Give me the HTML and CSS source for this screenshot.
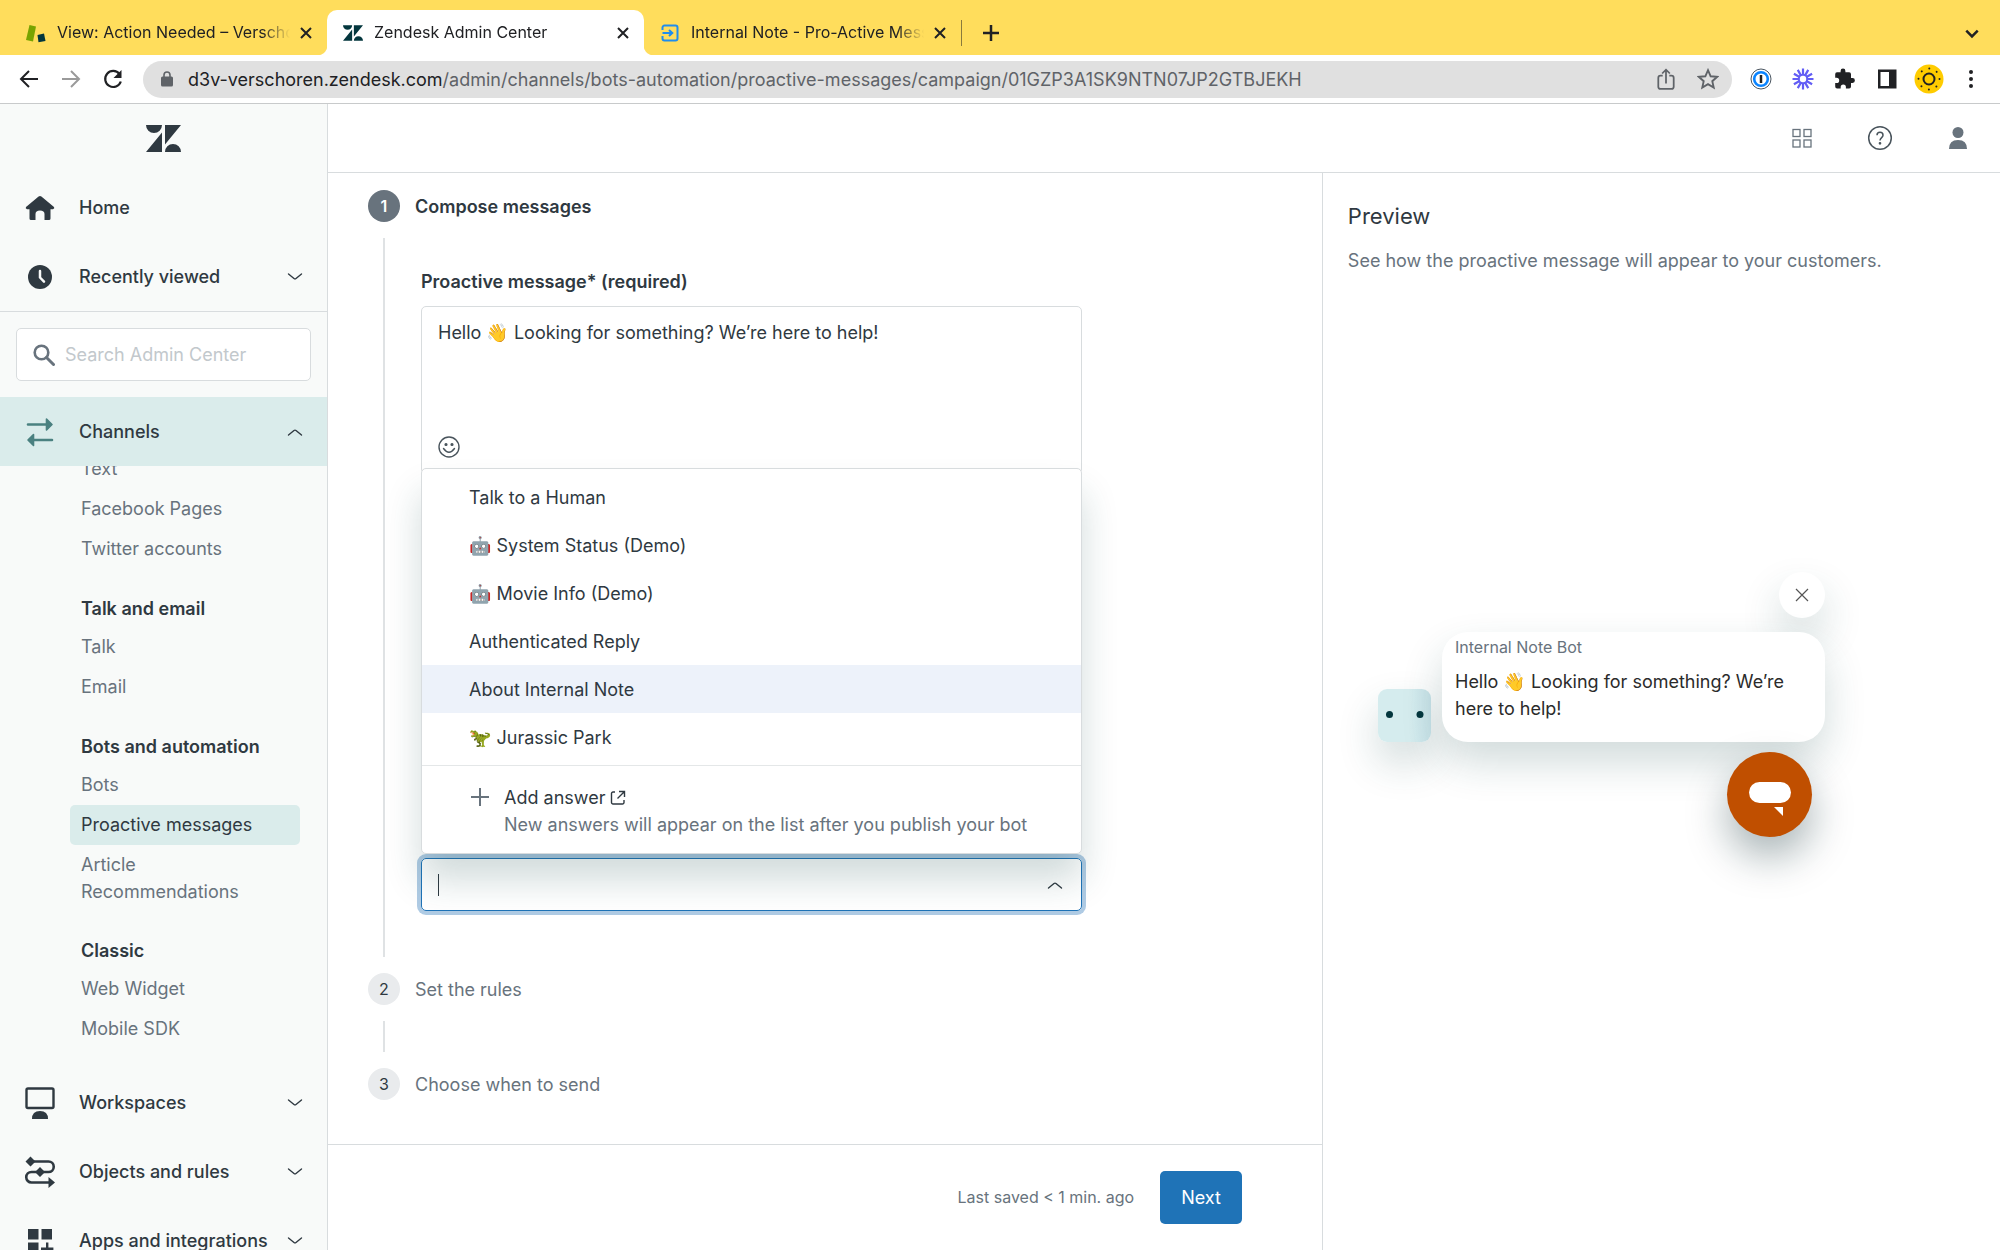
FILE: index.html
```html
<!DOCTYPE html>
<html lang="en">
<head>
    <meta charset="UTF-8">
    <meta name="viewport" content="width=device-width, initial-scale=1">
    <title>Zendesk Admin Center</title>
    <link rel="stylesheet" href="styles.css">
</head>
<body>
<!-- shared icons -->
<svg class="defs" aria-hidden="true">
    <symbol id="i-zendesk" viewBox="0 0 35 27"><path d="M0 0h16a8 8 0 0 1-16 0zM16 7.500V27H0zM19 0h16L19 19.500zM19 27a8 8 0 0 1 16 0z" fill="currentColor"/></symbol>
    <symbol id="i-close" viewBox="0 0 14 14"><path d="M2 2l10 10M12 2L2 12" fill="none" stroke="currentColor" stroke-width="2"/></symbol>
    <symbol id="i-down" viewBox="0 0 16 16"><path d="M1.500 5L7 9.500q1 .8 2 0L14.500 5" fill="none" stroke="currentColor" stroke-width="1.400" stroke-linecap="round"/></symbol>
    <symbol id="i-up" viewBox="0 0 16 16"><path d="M1.500 11L7 6.500q1-.8 2 0l5.500 4.500" fill="none" stroke="currentColor" stroke-width="1.400" stroke-linecap="round"/></symbol>
</svg>

<div class="browser">
    <div class="tabs">
        <div class="tab">
            <svg class="fav" viewBox="0 0 20 20"><path d="M3.500 2l6.500 1.500L7 18.500 0 17z" fill="#78a300"/><path d="M11.500 12l6.500-1.500 1.500 7.500-7 1.200z" fill="#03363d"/></svg>
            <span class="tab-title">View: Action Needed – Verschoren</span>
            <button class="tab-close" aria-label="Close tab"><svg><use href="#i-close"/></svg></button>
        </div>
        <div class="tab active">
            <svg class="fav logo"><use href="#i-zendesk"/></svg>
            <span class="tab-title">Zendesk Admin Center</span>
            <button class="tab-close" aria-label="Close tab"><svg><use href="#i-close"/></svg></button>
        </div>
        <div class="tab">
            <svg class="fav" viewBox="0 0 20 20" fill="none" stroke="#1f8ded" stroke-width="2"><path d="M2.500 7V4.500a2 2 0 0 1 2-2h11a2 2 0 0 1 2 2v11a2 2 0 0 1-2 2h-11a2 2 0 0 1-2-2V13M2.500 10H12M9 7l3.300 3L9 13"/></svg>
            <span class="tab-title">Internal Note - Pro-Active Messages</span>
            <button class="tab-close" aria-label="Close tab"><svg><use href="#i-close"/></svg></button>
        </div>
        <button class="new-tab" aria-label="New tab"><svg viewBox="0 0 18 18"><path d="M9 1v16M1 9h16" stroke="#202124" stroke-width="2.500"/></svg></button>
        <button class="tab-search" aria-label="Search tabs"><svg viewBox="0 0 14 14"><path d="M2 5l5 5 5-5" fill="none" stroke="#202124" stroke-width="2.200"/></svg></button>
    </div>

    <div class="toolbar">
        <button class="nav-btn" aria-label="Back"><svg viewBox="0 0 20 20"><path d="M19 10H2M10 2l-8 8 8 8" fill="none" stroke="#202124" stroke-width="2"/></svg></button>
        <button class="nav-btn" aria-label="Forward"><svg viewBox="0 0 20 20"><path d="M1 10h17M10 2l8 8-8 8" fill="none" stroke="#9a9a9a" stroke-width="2"/></svg></button>
        <button class="nav-btn" aria-label="Reload"><svg viewBox="0 0 20 20"><path d="M16.500 5A8 8 0 1 0 17.800 12.500" fill="none" stroke="#202124" stroke-width="2.200"/><path d="M18.500 1v8h-8z" fill="#202124"/></svg></button>
        <div class="omnibox">
            <svg class="lock" viewBox="0 0 12 16"><rect x="0" y="5.500" width="12" height="10" rx="1.500" fill="#5f6368"/><path d="M3 6V4a3 3 0 0 1 6 0v2" fill="none" stroke="#5f6368" stroke-width="1.600"/></svg>
            <span class="url"><b>d3v-verschoren.zendesk.com</b>/admin/channels/bots-automation/proactive-messages/campaign/01GZP3A1SK9NTN07JP2GTBJEKH</span>
            <button class="bar-btn" aria-label="Share"><svg viewBox="0 0 20 20" fill="none" stroke="#5f6368" stroke-width="1.600"><path d="M7 7H5a2 2 0 0 0-2 2v8a2 2 0 0 0 2 2h10a2 2 0 0 0 2-2V9a2 2 0 0 0-2-2h-2M10 14V2M6.500 5L10 1.500 13.500 5"/></svg></button>
            <button class="bar-btn" aria-label="Bookmark"><svg viewBox="0 0 20 20"><path d="M10 2l2.400 5.500 6 .5-4.500 4 1.300 5.800L10 14.700l-5.200 3.100L6.100 12 1.600 8l6-.5z" fill="none" stroke="#5f6368" stroke-width="1.700"/></svg></button>
        </div>
        <div class="extensions">
            <button class="bar-btn" aria-label="Passwords"><svg viewBox="0 0 22 22"><circle cx="11" cy="11" r="10" fill="#fff" stroke="#4a5560" stroke-width="1"/><circle cx="11" cy="11" r="6.800" fill="#fff" stroke="#0a84ff" stroke-width="2.600"/><path d="M11 7v8" stroke="#222" stroke-width="2.500"/></svg></button>
            <button class="bar-btn" aria-label="Loom"><svg viewBox="0 0 22 22"><g stroke="#625df5" stroke-width="2.200"><path d="M11 .5v21M.5 11h21M5.750 1.900l10.500 18.200M16.250 1.900L5.750 20.100M1.900 5.750l18.200 10.500M20.100 5.750L1.900 16.250"/></g><circle cx="11" cy="11" r="5.200" fill="#625df5"/><circle cx="11" cy="11" r="3.200" fill="#fff"/></svg></button>
            <button class="bar-btn" aria-label="Extensions"><svg viewBox="0 0 22 22"><path d="M18.500 10.100H17V6.200a1.900 1.900 0 0 0-1.900-1.900h-3.700V2.900a2.400 2.400 0 0 0-4.800 0v1.400H3A1.900 1.900 0 0 0 1.200 6.200v3.600h1.400a2.600 2.600 0 0 1 0 5.200H1.200v3.600a1.900 1.900 0 0 0 1.900 1.900h3.600v-1.400a2.600 2.600 0 0 1 5.200 0v1.400h3.200a1.900 1.900 0 0 0 1.900-1.900v-3.700h1.500a2.400 2.400 0 0 0 0-4.800z" fill="#202124"/></svg></button>
            <button class="bar-btn" aria-label="Side panel"><svg viewBox="0 0 22 22"><path d="M2 1.500h18.500v19H2z" fill="#202124"/><path d="M4.500 4H13v14H4.500z" fill="#fff"/></svg></button>
            <button class="profile" aria-label="Profile"><svg viewBox="0 0 30 30"><circle cx="15" cy="15" r="14.500" fill="#ffcc00"/><circle cx="15" cy="15" r="5.500" fill="none" stroke="#222" stroke-width="2"/><circle cx="15" cy="15" r="10.500" fill="none" stroke="#222" stroke-width="2" stroke-linecap="round" stroke-dasharray="0.010 8.236"/></svg></button>
            <button class="bar-btn" aria-label="Menu"><svg viewBox="0 0 22 22" fill="#202124"><circle cx="11" cy="4" r="2"/><circle cx="11" cy="11" r="2"/><circle cx="11" cy="18" r="2"/></svg></button>
        </div>
    </div>
</div>

<div class="app">
    <nav class="sidebar">
        <div class="brand"><svg class="brand-logo"><use href="#i-zendesk"/></svg></div>
        <a class="nav-row" href="#">
            <svg class="nav-icon" viewBox="0 0 32 32"><path d="M14.600 4.600q1.400-1.100 2.800 0L30 15q1 1.500-1 2.200h-2.500v9.300q0 1.500-1.500 1.500h-4.500v-6q0-3.500-4.500-3.500T11.500 22v6H7q-1.500 0-1.500-1.500v-9.300H3q-2-.7-1-2.200z" fill="#2f3941"/></svg>
            <span>Home</span>
        </a>
        <button class="nav-row">
            <svg class="nav-icon" viewBox="0 0 32 32"><circle cx="16" cy="16" r="12" fill="#2f3941"/><path d="M16 10v6.500l4 4.200" fill="none" stroke="#f8f9f9" stroke-width="2.500" stroke-linecap="round" stroke-linejoin="round"/></svg>
            <span>Recently viewed</span>
            <svg class="chev"><use href="#i-down"/></svg>
        </button>
        <div class="search-wrap">
            <label class="search">
                <svg viewBox="0 0 22 22"><circle cx="8.500" cy="8.500" r="6.800" fill="none" stroke="#68737d" stroke-width="2.600"/><path d="M13.500 13.500l7 7" stroke="#68737d" stroke-width="3" stroke-linecap="round"/></svg>
                <input type="search" placeholder="Search Admin Center" aria-label="Search Admin Center">
            </label>
        </div>
        <button class="nav-row open">
            <svg class="nav-icon" viewBox="0 0 32 32" stroke="#4a8180" fill="#4a8180" stroke-linecap="round" stroke-linejoin="round"><path d="M4 8.500h20M28 24H8" stroke-width="2.600" fill="none"/><path d="M22.500 3L28 8.500 22.500 14zM9.500 18.500L4 24l5.500 5.500z" stroke-width="1.600"/></svg>
            <span>Channels</span>
            <svg class="chev"><use href="#i-up"/></svg>
        </button>
        <div class="submenu">
            <div class="submenu-list">
                <a href="#">Text</a>
                <a href="#">Facebook Pages</a>
                <a href="#">Twitter accounts</a>
                <h3>Talk and email</h3>
                <a href="#">Talk</a>
                <a href="#">Email</a>
                <h3>Bots and automation</h3>
                <a href="#">Bots</a>
                <a href="#" class="current">Proactive messages</a>
                <a href="#">Article Recommendations</a>
                <h3>Classic</h3>
                <a href="#">Web Widget</a>
                <a href="#">Mobile SDK</a>
            </div>
        </div>
        <button class="nav-row">
            <svg class="nav-icon" viewBox="0 0 32 32"><rect x="2.500" y="1.500" width="27" height="19.500" rx="1.500" fill="none" stroke="#2f3941" stroke-width="2.400"/><path d="M8 32q0-8 8-8t8 8z" fill="#2f3941"/></svg>
            <span>Workspaces</span>
            <svg class="chev"><use href="#i-down"/></svg>
        </button>
        <button class="nav-row">
            <svg class="nav-icon" viewBox="0 0 32 32"><path d="M7 5.500h17.500a5 5 0 0 1 0 10.500h-17a5 5 0 0 0 0 10.500H26" fill="none" stroke="#2f3941" stroke-width="2.600"/><path d="M6.500.5l5 5-5 5-5-5zM16 11l5 5-5 5-5-5zM24.500 21l6.500 5.500-6.500 5.500z" fill="#2f3941"/></svg>
            <span>Objects and rules</span>
            <svg class="chev"><use href="#i-down"/></svg>
        </button>
        <button class="nav-row">
            <svg class="nav-icon" viewBox="0 0 32 32"><path d="M4 4h10.500v10.500H4zM17.500 4H28v10.500H17.500zM4 17.500h10.500V28H4zM22 17.500h2.400v5h5v2.400h-5v5H22v-5h-5v-2.400h5z" fill="#2f3941"/></svg>
            <span>Apps and integrations</span>
            <svg class="chev"><use href="#i-down"/></svg>
        </button>
    </nav>

    <div class="page">
        <header class="topbar">
            <button aria-label="Products"><svg viewBox="0 0 26 26" fill="none" stroke="#68737d" stroke-width="1.300"><rect x="4" y="4.500" width="7" height="7"/><rect x="15" y="4.500" width="7" height="7"/><rect x="4" y="15" width="7" height="7"/><rect x="15" y="15" width="7" height="7"/></svg></button>
            <button aria-label="Help"><svg viewBox="0 0 26 26" fill="none" stroke="#49545c" stroke-width="1.500"><circle cx="13" cy="13" r="11.300"/><path d="M10 10.300c0-4 6-4 6 0 0 2.400-3 2.200-3 5.200"/><circle cx="13" cy="18.300" r=".6" fill="#49545c"/></svg></button>
            <button aria-label="Account"><svg viewBox="0 0 26 26" fill="#68737d"><circle cx="13" cy="7.500" r="5.500"/><path d="M4 24q0-9 9-9t9 9z"/></svg></button>
        </header>

        <div class="content">
            <main class="editor">
                <div class="steps">
                    <section class="step current">
                        <h2><span class="num">1</span>Compose messages</h2>
                        <div class="step-body form">
                            <label class="field-label" for="message">Proactive message* (required)</label>
                            <div class="composer">
                                <textarea id="message">Hello 👋 Looking for something? We’re here to help!</textarea>
                                <button class="emoji-btn" aria-label="Insert emoji"><svg viewBox="0 0 22 22" fill="none" stroke="#49545c" stroke-width="1.400"><circle cx="11" cy="11" r="10"/><path d="M5.500 12.500q5.500 7.500 11 0" stroke-linecap="round"/><circle cx="8" cy="8.500" r=".9" fill="#49545c"/><circle cx="14" cy="8.500" r=".9" fill="#49545c"/></svg></button>
                            </div>
                            <div class="combo">
                                <span class="caret"></span>
                                <input type="text" role="combobox" aria-label="Answer" aria-expanded="true">
                                <svg class="chev"><use href="#i-up"/></svg>
                                <div class="menu">
                                    <ul role="listbox">
                                        <li role="option">Talk to a Human</li>
                                        <li role="option">🤖 System Status (Demo)</li>
                                        <li role="option">🤖 Movie Info (Demo)</li>
                                        <li role="option">Authenticated Reply</li>
                                        <li role="option" class="hover">About Internal Note</li>
                                        <li role="option">🦖 Jurassic Park</li>
                                    </ul>
                                    <a class="add" href="#">
                                        <svg class="plus" viewBox="0 0 18 18"><path d="M9 0v18M0 9h18" stroke="#68737d" stroke-width="2"/></svg>
                                        <span>
                                            <span class="add-title">Add answer <svg viewBox="0 0 16 16" fill="none" stroke="#2f3941" stroke-width="1.400"><path d="M5 2H3a1.500 1.500 0 0 0-1.500 1.500v9A1.500 1.500 0 0 0 3 14h9.500a1.500 1.500 0 0 0 1.500-1.500V10M9 1.500h5.500V7M14 2L7.500 8.500"/></svg></span>
                                            <span class="add-note">New answers will appear on the list after you publish your bot</span>
                                        </span>
                                    </a>
                                </div>
                            </div>
                        </div>
                    </section>
                    <section class="step">
                        <h2><span class="num">2</span>Set the rules</h2>
                        <div class="step-body"></div>
                    </section>
                    <section class="step">
                        <h2><span class="num">3</span>Choose when to send</h2>
                    </section>
                </div>
                <footer class="actions">
                    <span>Last saved &lt; 1 min. ago</span>
                    <button class="primary">Next</button>
                </footer>
            </main>

            <aside class="preview">
                <h1>Preview</h1>
                <p>See how the proactive message will appear to your customers.</p>
                <div class="widget">
                    <button class="dismiss" aria-label="Dismiss"><svg viewBox="0 0 14 14"><path d="M1 1l12 12M13 1L1 13" stroke="#555" stroke-width="1.200"/></svg></button>
                    <div class="message">
                        <svg class="bot" viewBox="0 0 53 53"><circle cx="11.500" cy="25.500" r="3.500" fill="#03363d"/><circle cx="42" cy="25.500" r="3.500" fill="#03363d"/></svg>
                        <div class="bubble">
                            <div class="from">Internal Note Bot</div>
                            <div class="text">Hello 👋 Looking for something? We’re here to help!</div>
                        </div>
                    </div>
                    <button class="launcher" aria-label="Open messaging"><svg viewBox="0 0 42 34"><rect width="42" height="21" rx="10.500" fill="#fff"/><path d="M25 25h9v9z" fill="#fff"/></svg></button>
                </div>
            </aside>
        </div>
    </div>
</div>
</body>
</html>
```
FILE: styles.css
```css
* {
    box-sizing: border-box;
    margin: 0;
    padding: 0;
}

body {
    display: flex;
    flex-direction: column;
    height: 100vh;
    overflow: hidden;
    background: #fff;
    color: #2f3941;
    font: 18px/27px Inter, "Noto Color Emoji", sans-serif;
}

button {
    border: 0;
    background: none;
    color: inherit;
    font: inherit;
    cursor: pointer;
}

input,
textarea {
    border: 0;
    outline: 0;
    background: none;
    color: inherit;
    font: inherit;
}

a {
    color: inherit;
    text-decoration: none;
}

svg {
    display: block;
    flex: none;
}

.defs {
    position: absolute;
    width: 0;
    height: 0;
}

/* browser chrome */
.browser {
    flex: none;
    border-bottom: 1px solid #c8cacb;
}

.tabs {
    display: flex;
    align-items: stretch;
    height: 55px;
    padding: 10px 20px 0 10px;
    background: #ffdd5c;
    color: #202124;
    font-size: 16px;
}

.tab {
    display: flex;
    align-items: center;
    width: 317px;
    padding: 0 14px 0 16px;
}

.tab.active {
    position: relative;
    background: #fff;
    border-radius: 10px 10px 0 0;
}

.tab.active::before,
.tab.active::after {
    content: "";
    position: absolute;
    bottom: 0;
    left: -10px;
    width: 10px;
    height: 10px;
    background: radial-gradient(circle at 0 0, #ffdd5c 10px, #fff 11px);
}

.tab.active::after {
    left: 100%;
    background: radial-gradient(circle at 100% 0, #ffdd5c 10px, #fff 11px);
}

.fav {
    width: 20px;
    height: 20px;
    margin-right: 11px;
}

.fav.logo {
    color: #03363d;
}

.tab-title {
    flex: 1;
    overflow: hidden;
    white-space: nowrap;
    -webkit-mask-image: linear-gradient(to right, #000 88%, transparent);
    mask-image: linear-gradient(to right, #000 88%, transparent);
}

.tab-close svg {
    width: 14px;
    height: 14px;
    margin-left: 9px;
}

.new-tab {
    display: flex;
    align-items: center;
    height: 26px;
    margin-top: 10px;
    padding: 0 20px;
    border-left: 1px solid #8a7a3c;
}

.new-tab svg {
    width: 18px;
    height: 18px;
}

.tab-search {
    margin-left: auto;
}

.tab-search svg {
    width: 16px;
    height: 16px;
}

.toolbar {
    display: flex;
    align-items: center;
    height: 48px;
    padding: 0 18px 0 19px;
}

.nav-btn {
    padding-right: 22px;
}

.nav-btn svg {
    width: 20px;
    height: 20px;
}

.omnibox {
    display: flex;
    flex: 1;
    align-items: center;
    gap: 20px;
    height: 37px;
    margin-left: -2px;
    padding: 0 13px 0 18px;
    border-radius: 19px;
    background: #e0e0e0;
}

.lock {
    width: 12px;
    height: 16px;
}

.url {
    flex: 1;
    margin-left: -5px;
    overflow: hidden;
    color: #5f6368;
    white-space: nowrap;
}

.url b {
    color: #202124;
    font-weight: 400;
}

.bar-btn svg {
    width: 22px;
    height: 22px;
}

.profile svg {
    width: 30px;
    height: 30px;
}

.extensions {
    display: flex;
    align-items: center;
    gap: 20px;
    padding-left: 18px;
}

.extensions .profile {
    margin: 0 -4px;
}

/* sidebar */
.app {
    display: flex;
    flex: 1;
    min-height: 0;
}

.sidebar {
    display: flex;
    flex: none;
    flex-direction: column;
    width: 328px;
    overflow: hidden;
    border-right: 1px solid #d8dcde;
    background: #f8faf9;
}

.brand {
    display: flex;
    flex: none;
    align-items: center;
    justify-content: center;
    height: 69px;
}

.brand-logo {
    width: 35px;
    height: 27px;
}

.nav-row {
    display: flex;
    flex: none;
    align-items: center;
    width: 100%;
    height: 69px;
    padding: 0 24px;
    font-weight: 500;
    text-align: left;
    white-space: nowrap;
}

.nav-row.open {
    background: #daeceb;
}

.nav-icon {
    width: 32px;
    height: 32px;
    margin-right: 23px;
}

.chev {
    width: 16px;
    height: 16px;
    margin-left: auto;
}

.search-wrap {
    flex: none;
    padding: 16px;
    border-top: 1px solid #d8dcde;
}

.search {
    display: flex;
    align-items: center;
    gap: 10px;
    height: 53px;
    padding: 0 16px;
    border: 1px solid #d8dcde;
    border-radius: 5px;
    background: #fff;
}

.search svg {
    width: 22px;
    height: 22px;
}

.search input {
    flex: 1;
    min-width: 0;
}

.search input::placeholder {
    color: #c2c8cc;
}

.submenu {
    flex: none;
    overflow: hidden;
    padding: 0 27px 19px 70px;
}

/* the list is scrolled a little under the Channels row */
.submenu-list {
    margin-top: -17px;
}

.submenu a {
    display: block;
    min-height: 40px;
    padding: 6px 11px;
    border-radius: 5px;
    color: #68737d;
}

.submenu a.current {
    background: #daeceb;
    color: #2f3941;
}

.submenu h3 {
    padding: 26px 11px 5px;
    font-size: 18px;
    font-weight: 600;
}

/* page */
.page {
    display: flex;
    flex: 1;
    flex-direction: column;
    min-width: 0;
}

.topbar {
    display: flex;
    flex: none;
    align-items: center;
    justify-content: flex-end;
    gap: 52px;
    height: 69px;
    padding: 0 29px;
    border-bottom: 1px solid #d8dcde;
}

.topbar svg {
    width: 26px;
    height: 26px;
}

.content {
    display: flex;
    flex: 1;
    min-height: 0;
}

.editor {
    display: flex;
    flex: 1;
    flex-direction: column;
    min-width: 0;
    border-right: 1px solid #d8dcde;
}

.steps {
    flex: 1;
    padding: 17px 40px;
}

.step h2 {
    display: flex;
    align-items: center;
    gap: 15px;
    height: 32px;
    color: #68737d;
    font-size: 18px;
    font-weight: 400;
}

.step.current h2 {
    color: #2f3941;
    font-weight: 600;
}

.num {
    width: 32px;
    height: 32px;
    border-radius: 50%;
    background: #e9ebed;
    color: #2f3941;
    font-size: 16px;
    line-height: 32px;
    text-align: center;
}

.current .num {
    background: #68737d;
    color: #fff;
}

.step-body {
    min-height: 31px;
    margin: 16px 0 16px 15px;
    border-left: 2px solid #dfe2e4;
}

.form {
    padding: 30px 0 46px 36px;
}

.field-label {
    display: block;
    margin-bottom: 11px;
    font-weight: 600;
}

.composer {
    display: flex;
    flex-direction: column;
    justify-content: space-between;
    max-width: 661px;
    height: 168px;
    padding: 12px 16px 15px;
    border: 1px solid #d8dcde;
    border-radius: 5px;
}

.composer textarea {
    height: 81px;
    resize: none;
}

.emoji-btn {
    align-self: flex-start;
}

.emoji-btn svg {
    width: 22px;
    height: 22px;
}

.combo {
    position: relative;
    display: flex;
    align-items: center;
    max-width: 661px;
    height: 53px;
    margin-top: 384px;
    padding: 0 18px 0 16px;
    border: 1px solid #1f73b7;
    border-radius: 5px;
    box-shadow: 0 0 0 4px #afcbe4;
}

.caret {
    width: 1px;
    height: 22px;
    background: #2f3941;
}

.combo input {
    flex: 1;
    min-width: 0;
}

.menu {
    position: absolute;
    right: -1px;
    bottom: 56px;
    left: -1px;
    border: 1px solid #d8dcde;
    border-radius: 5px;
    background: #fff;
    box-shadow: 0 26px 36px rgba(23, 73, 77, .2);
}

.menu ul {
    padding: 4px 0;
    border-bottom: 1px solid #e4e7e8;
    list-style: none;
}

.menu li {
    padding: 11px 47px 10px;
    white-space: nowrap;
}

.menu li.hover {
    background: #edf2fa;
}

.add {
    display: flex;
    gap: 15px;
    padding: 18px 48px 15px 49px;
    white-space: nowrap;
}

.plus {
    width: 18px;
    height: 18px;
    margin-top: 4px;
}

.add-title {
    display: flex;
    align-items: center;
    gap: 5px;
}

.add-title svg {
    width: 16px;
    height: 16px;
}

.add-note {
    color: #68737d;
}

.actions {
    display: flex;
    align-items: center;
    justify-content: flex-end;
    gap: 26px;
    height: 106px;
    padding: 0 80px;
    border-top: 1px solid #d8dcde;
    color: #68737d;
    font-size: 16px;
}

.primary {
    height: 53px;
    padding: 0 21px;
    border-radius: 5px;
    background: #1f73b7;
    color: #fff;
    font-size: 18px;
}

/* preview */
.preview {
    flex: none;
    width: 40.5%;
    padding: 27px 25px;
}

.preview h1 {
    margin-bottom: 15px;
    font-size: 22px;
    font-weight: 400;
    line-height: 32px;
}

.preview p {
    color: #68737d;
}

.widget {
    display: flex;
    flex-direction: column;
    align-items: flex-end;
    margin: 298px 150px 0 0;
}

.dismiss {
    display: flex;
    align-items: center;
    justify-content: center;
    width: 46px;
    height: 46px;
    border-radius: 50%;
    background: #fff;
    box-shadow: 0 20px 40px rgba(23, 73, 77, .2);
}

.dismiss svg {
    width: 14px;
    height: 14px;
}

.message {
    display: flex;
    align-items: flex-end;
    gap: 11px;
    margin: 14px 0 10px;
}

.bot {
    width: 53px;
    height: 53px;
    border-radius: 9px;
    background: linear-gradient(to right, #d5ecee 60%, #c8e2e8);
    box-shadow: 0 20px 40px rgba(23, 73, 77, .2);
}

.bubble {
    width: 383px;
    padding: 2px 13px 20px;
    border-radius: 26px;
    background: #fff;
    box-shadow: 0 20px 40px rgba(23, 73, 77, .2);
}

.from {
    margin-bottom: 7px;
    color: #68737d;
    font-size: 16px;
}

.text {
    color: #2b2b2b;
}

.launcher {
    display: flex;
    align-items: center;
    justify-content: center;
    width: 85px;
    height: 85px;
    margin-right: 13px;
    border-radius: 50%;
    background: #c04f00;
    box-shadow: 0 20px 40px rgba(10, 40, 45, .35);
}

.launcher svg {
    width: 42px;
    height: 34px;
    margin-top: 8px;
}
```
